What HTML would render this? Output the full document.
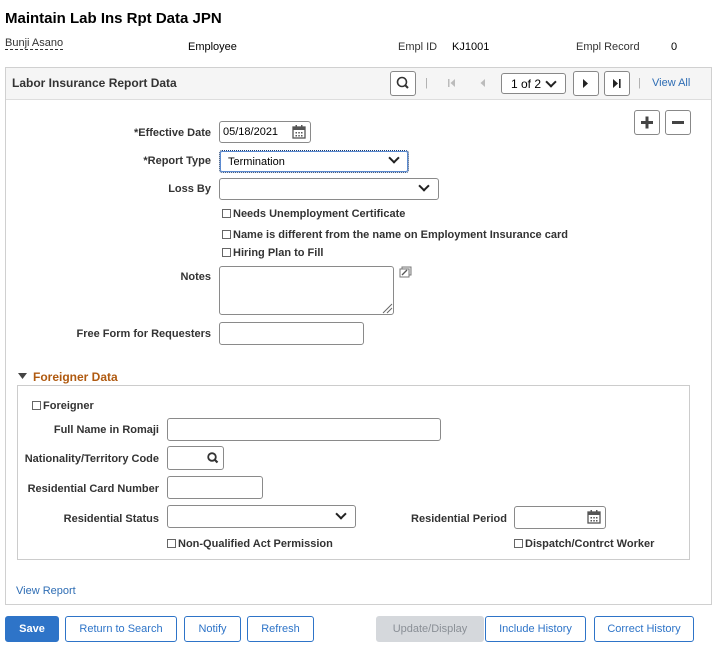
<!DOCTYPE html>
<html><head><style>
*{box-sizing:border-box;margin:0;padding:0}
body{width:722px;height:671px;background:#fff;font-family:"Liberation Sans",Arial,sans-serif;font-size:11px;color:#333;position:relative;overflow:hidden}
.a{position:absolute;white-space:nowrap}
.l{position:absolute;font-weight:bold;text-align:right;white-space:nowrap;color:#333}
.box{position:absolute;border:1px solid #8a8a8a;border-radius:3px;background:#fff}
.chev{position:absolute;width:8px;height:8px;border-right:2px solid #222;border-bottom:2px solid #222;transform:rotate(45deg)}
.cb{display:inline-block;width:9px;height:9px;border:1px solid #666;vertical-align:-1px;margin-right:2px;background:#fff}
.btn{position:absolute;top:616px;height:26px;border:1px solid #2e74c8;border-radius:3px;color:#2e74c8;background:#fff;font-size:11px;text-align:center;line-height:24px}
.ib{position:absolute;border:1px solid #888;border-radius:3px;background:#fff}
</style></head><body>
<div class="a" style="left:5px;top:10px;font-size:15px;font-weight:bold;color:#000">Maintain Lab Ins Rpt Data JPN</div>
<div class="a" style="left:5px;top:37px;border-bottom:1px dashed #333;line-height:12px">Bunji Asano</div>
<div class="a" style="left:188px;top:41px;color:#000">Employee</div>
<div class="a" style="left:398px;top:41px">Empl ID</div>
<div class="a" style="left:452px;top:41px;color:#000">KJ1001</div>
<div class="a" style="left:576px;top:41px">Empl Record</div>
<div class="a" style="left:671px;top:41px;color:#000">0</div>

<div style="position:absolute;left:5px;top:67px;width:707px;height:538px;border:1px solid #d0d0d0"></div>
<div style="position:absolute;left:6px;top:68px;width:705px;height:32px;background:#f5f5f5;border-bottom:1px solid #ddd"></div>
<div class="a" style="left:12px;top:76px;font-size:12px;font-weight:bold;color:#333">Labor Insurance Report Data</div>
<div class="ib" style="left:390px;top:71px;width:26px;height:25px"><svg width="24" height="23"><circle cx="11" cy="10" r="4.5" fill="none" stroke="#333" stroke-width="1.6"/><line x1="14" y1="13" x2="17" y2="16" stroke="#333" stroke-width="2"/></svg></div>
<div class="a" style="left:425px;top:77px;color:#aaa">|</div>
<svg class="a" style="left:447px;top:78px" width="10" height="10"><rect x="1" y="1" width="1.5" height="8" fill="#bbb"/><polygon points="8,1 3.5,5 8,9" fill="#bbb"/></svg>
<svg class="a" style="left:478px;top:78px" width="10" height="10"><polygon points="7,1 2.5,5 7,9" fill="#bbb"/></svg>
<div class="ib" style="left:501px;top:73px;width:65px;height:21px"><span class="a" style="left:9px;top:3px;color:#000;font-size:12px">1 of 2</span><div class="chev" style="left:45px;top:4px"></div></div>
<div class="ib" style="left:573px;top:71px;width:26px;height:25px"><svg width="24" height="23"><polygon points="9,7 14,11.5 9,16" fill="#222"/></svg></div>
<div class="ib" style="left:604px;top:71px;width:26px;height:25px"><svg width="24" height="23"><polygon points="8,7 13,11.5 8,16" fill="#222"/><rect x="14" y="7" width="1.6" height="9" fill="#222"/></svg></div>
<div class="a" style="left:638px;top:77px;color:#aaa">|</div>
<div class="a" style="left:652px;top:77px;color:#2e6db4">View All</div>

<div class="ib" style="left:634px;top:110px;width:26px;height:25px"><svg width="24" height="23"><rect x="6" y="10" width="12" height="3" fill="#444"/><rect x="10.5" y="5.5" width="3" height="12" fill="#444"/></svg></div>
<div class="ib" style="left:665px;top:110px;width:26px;height:25px"><svg width="24" height="23"><rect x="6" y="10" width="12" height="3" fill="#444"/></svg></div>

<div class="l" style="right:511px;top:127px">*Effective Date</div>
<div class="box" style="left:219px;top:121px;width:92px;height:22px"><span class="a" style="left:3px;top:4px;color:#000">05/18/2021</span>
<svg class="a" style="left:71px;top:2px" width="16" height="16"><rect x="2" y="3" width="12" height="11" fill="none" stroke="#555" stroke-width="1.3"/><rect x="2" y="3" width="12" height="3" fill="#555"/><rect x="4.5" y="1" width="1.5" height="3" fill="#555"/><rect x="10" y="1" width="1.5" height="3" fill="#555"/><g fill="#555"><rect x="4.5" y="8" width="1.5" height="1.5"/><rect x="7.3" y="8" width="1.5" height="1.5"/><rect x="10" y="8" width="1.5" height="1.5"/><rect x="4.5" y="11" width="1.5" height="1.5"/><rect x="7.3" y="11" width="1.5" height="1.5"/><rect x="10" y="11" width="1.5" height="1.5"/></g></svg></div>
<div class="l" style="right:511px;top:155px">*Report Type</div>
<div class="box" style="left:219px;top:150px;width:190px;height:23px;border:1px dotted #1a3b6e;outline:1px solid #5b8ad0;outline-offset:-2px"><span class="a" style="left:8px;top:5px;color:#000">Termination</span><div class="chev" style="left:170px;top:3px"></div></div>
<div class="l" style="right:511px;top:183px">Loss By</div>
<div class="box" style="left:219px;top:178px;width:220px;height:22px"><div class="chev" style="left:200px;top:3px"></div></div>
<div class="a" style="left:222px;top:208px;font-weight:bold"><span class="cb"></span>Needs Unemployment Certificate</div>
<div class="a" style="left:222px;top:229px;font-weight:bold"><span class="cb"></span>Name is different from the name on Employment Insurance card</div>
<div class="a" style="left:222px;top:247px;font-weight:bold"><span class="cb"></span>Hiring Plan to Fill</div>
<div class="l" style="right:511px;top:271px">Notes</div>
<div class="box" style="left:219px;top:266px;width:175px;height:49px"><svg class="a" style="left:161px;top:35px" width="12" height="12"><line x1="2" y1="11" x2="11" y2="2" stroke="#666"/><line x1="6" y1="11" x2="11" y2="6" stroke="#666"/></svg></div>
<svg class="a" style="left:399px;top:266px" width="13" height="12"><rect x="3" y="1" width="9" height="8" fill="#eee" stroke="#777"/><rect x="1" y="3" width="9" height="8" fill="#fff" stroke="#777"/><line x1="3" y1="9" x2="8" y2="4" stroke="#555" stroke-width="1.3"/></svg>
<div class="l" style="right:511px;top:328px">Free Form for Requesters</div>
<div class="box" style="left:219px;top:322px;width:145px;height:23px"></div>

<svg class="a" style="left:18px;top:372px" width="10" height="8"><polygon points="0,1 9,1 4.5,7" fill="#444"/></svg>
<div class="a" style="left:33px;top:370px;font-size:12px;font-weight:bold;color:#b05a10">Foreigner Data</div>
<div style="position:absolute;left:17px;top:385px;width:673px;height:175px;border:1px solid #ccc"></div>
<div class="a" style="left:32px;top:400px;font-weight:bold"><span class="cb"></span>Foreigner</div>
<div class="l" style="right:563px;top:424px">Full Name in Romaji</div>
<div class="box" style="left:167px;top:418px;width:274px;height:23px"></div>
<div class="l" style="right:563px;top:453px">Nationality/Territory Code</div>
<div class="box" style="left:167px;top:446px;width:57px;height:24px"><svg class="a" style="left:38px;top:4px" width="14" height="14"><circle cx="6" cy="6" r="3.8" fill="none" stroke="#333" stroke-width="1.8"/><line x1="8.5" y1="8.5" x2="11.5" y2="11.5" stroke="#333" stroke-width="2.2"/></svg></div>
<div class="l" style="right:563px;top:483px">Residential Card Number</div>
<div class="box" style="left:167px;top:476px;width:96px;height:23px"></div>
<div class="l" style="right:563px;top:513px">Residential Status</div>
<div class="box" style="left:167px;top:505px;width:189px;height:23px"><div class="chev" style="left:169px;top:4px"></div></div>
<div class="l" style="right:215px;top:513px">Residential Period</div>
<div class="box" style="left:514px;top:506px;width:92px;height:23px"><svg class="a" style="left:71px;top:2px" width="16" height="16"><rect x="2" y="3" width="12" height="11" fill="none" stroke="#555" stroke-width="1.3"/><rect x="2" y="3" width="12" height="3" fill="#555"/><rect x="4.5" y="1" width="1.5" height="3" fill="#555"/><rect x="10" y="1" width="1.5" height="3" fill="#555"/><g fill="#555"><rect x="4.5" y="8" width="1.5" height="1.5"/><rect x="7.3" y="8" width="1.5" height="1.5"/><rect x="10" y="8" width="1.5" height="1.5"/><rect x="4.5" y="11" width="1.5" height="1.5"/><rect x="7.3" y="11" width="1.5" height="1.5"/><rect x="10" y="11" width="1.5" height="1.5"/></g></svg></div>
<div class="a" style="left:167px;top:538px;font-weight:bold"><span class="cb"></span>Non-Qualified Act Permission</div>
<div class="a" style="left:514px;top:538px;font-weight:bold"><span class="cb"></span>Dispatch/Contrct Worker</div>

<div class="a" style="left:16px;top:585px;color:#2e6db4">View Report</div>

<div class="btn" style="left:5px;width:54px;background:#2e74c8;color:#fff;font-weight:bold">Save</div>
<div class="btn" style="left:65px;width:112px">Return to Search</div>
<div class="btn" style="left:184px;width:57px">Notify</div>
<div class="btn" style="left:247px;width:67px">Refresh</div>
<div class="btn" style="left:376px;width:108px;background:#d5d8dc;border-color:#d5d8dc;color:#8a8f96">Update/Display</div>
<div class="btn" style="left:485px;width:101px">Include History</div>
<div class="btn" style="left:594px;width:100px">Correct History</div>
</body></html>
